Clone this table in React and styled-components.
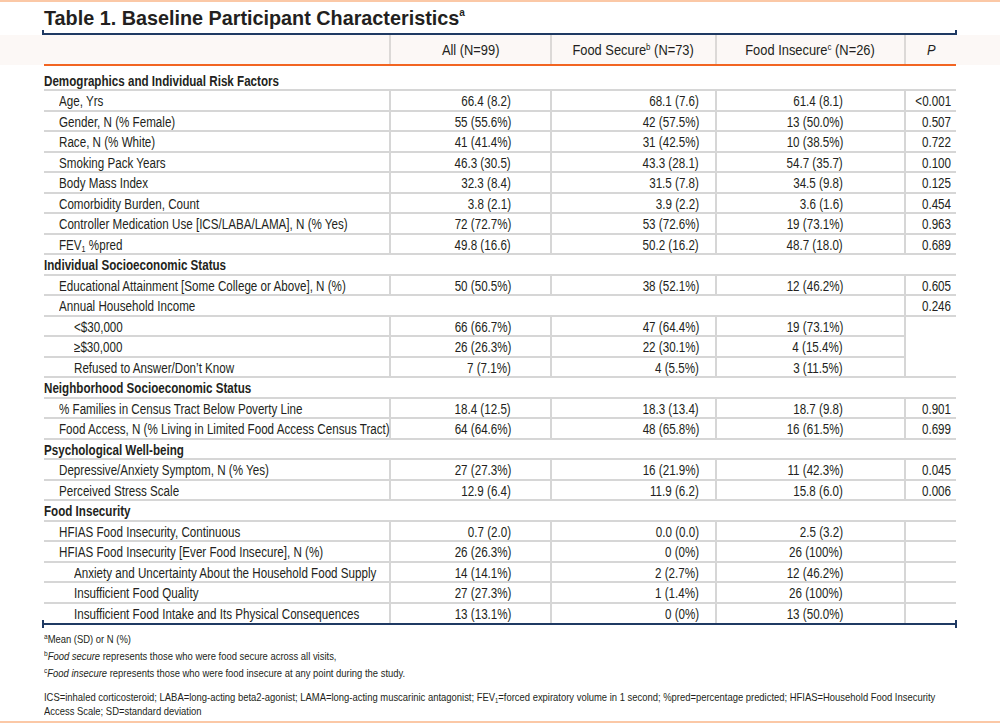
import React from "react"
import styled, { createGlobalStyle } from 'styled-components'

const rows = [
    { section: 'Demographics and Individual Risk Factors', first: true },
    { label: 'Age, Yrs', v: ['66.4 (8.2)', '68.1 (7.6)', '61.4 (8.1)', '<0.001'] },
    { label: 'Gender, N (% Female)', v: ['55 (55.6%)', '42 (57.5%)', '13 (50.0%)', '0.507'] },
    { label: 'Race, N (% White)', v: ['41 (41.4%)', '31 (42.5%)', '10 (38.5%)', '0.722'] },
    { label: 'Smoking Pack Years', v: ['46.3 (30.5)', '43.3 (28.1)', '54.7 (35.7)', '0.100'] },
    { label: 'Body Mass Index', v: ['32.3 (8.4)', '31.5 (7.8)', '34.5 (9.8)', '0.125'] },
    { label: 'Comorbidity Burden, Count', v: ['3.8 (2.1)', '3.9 (2.2)', '3.6 (1.6)', '0.454'] },
    { label: 'Controller Medication Use [ICS/LABA/LAMA], N (% Yes)', v: ['72 (72.7%)', '53 (72.6%)', '19 (73.1%)', '0.963'] },
    { label: <>FEV<sub>1</sub> %pred</>, v: ['49.8 (16.6)', '50.2 (16.2)', '48.7 (18.0)', '0.689'] },
    { section: 'Individual Socioeconomic Status' },
    { label: 'Educational Attainment [Some College or Above], N (%)', v: ['50 (50.5%)', '38 (52.1%)', '12 (46.2%)', '0.605'] },
    { label: 'Annual Household Income', onlyP: '0.246' },
    { label: '<$30,000', indent: 2, v: ['66 (66.7%)', '47 (64.4%)', '19 (73.1%)'], pSpan: 3 },
    { label: '≥$30,000', indent: 2, v: ['26 (26.3%)', '22 (30.1%)', '4 (15.4%)'] },
    { label: 'Refused to Answer/Don’t Know', indent: 2, v: ['7 (7.1%)', '4 (5.5%)', '3 (11.5%)'] },
    { section: 'Neighborhood Socioeconomic Status' },
    { label: '% Families in Census Tract Below Poverty Line', v: ['18.4 (12.5)', '18.3 (13.4)', '18.7 (9.8)', '0.901'] },
    { label: 'Food Access, N (% Living in Limited Food Access Census Tract)', v: ['64 (64.6%)', '48 (65.8%)', '16 (61.5%)', '0.699'] },
    { section: 'Psychological Well-being' },
    { label: 'Depressive/Anxiety Symptom, N (% Yes)', v: ['27 (27.3%)', '16 (21.9%)', '11 (42.3%)', '0.045'] },
    { label: 'Perceived Stress Scale', v: ['12.9 (6.4)', '11.9 (6.2)', '15.8 (6.0)', '0.006'] },
    { section: 'Food Insecurity' },
    { label: 'HFIAS Food Insecurity, Continuous', v: ['0.7 (2.0)', '0.0 (0.0)', '2.5 (3.2)', ''] },
    { label: 'HFIAS Food Insecurity [Ever Food Insecure], N (%)', v: ['26 (26.3%)', '0 (0%)', '26 (100%)', ''] },
    { label: 'Anxiety and Uncertainty About the Household Food Supply', indent: 2, v: ['14 (14.1%)', '2 (2.7%)', '12 (46.2%)', ''] },
    { label: 'Insufficient Food Quality', indent: 2, v: ['27 (27.3%)', '1 (1.4%)', '26 (100%)', ''] },
    { label: 'Insufficient Food Intake and Its Physical Consequences', indent: 2, v: ['13 (13.1%)', '0 (0%)', '13 (50.0%)', ''] },
]

// right padding of each value column, so numbers line up like the print table
const valuePad = [39, 16, 61, 5]

export default function App() {
    return <Page>
        <GlobalStyle />
        <Title>Table 1. Baseline Participant Characteristics<TitleSup>a</TitleSup></Title>
        <Rule><Tick /><Line /><Tick /></Rule>
        <Table>
            <colgroup>
                <col style={{ width: 346 }} />
                <col style={{ width: 161 }} />
                <col style={{ width: 165 }} />
                <col style={{ width: 189 }} />
                <col style={{ width: 51 }} />
            </colgroup>
            <thead>
                <tr>
                    <HeadCell $edge="left"></HeadCell>
                    <HeadCell><Narrow $origin="center">All (N=99)</Narrow></HeadCell>
                    <HeadCell><Narrow $origin="center">Food Secure<Sup>b</Sup> (N=73)</Narrow></HeadCell>
                    <HeadCell><Narrow $origin="center">Food Insecure<Sup>c</Sup> (N=26)</Narrow></HeadCell>
                    <HeadCell $edge="right"><Narrow $origin="center"><em>P</em></Narrow></HeadCell>
                </tr>
            </thead>
            <tbody>
                {rows.map((r, i) => {
                    const last = i === rows.length - 1
                    if (r.section) {
                        return <Row key={i} $h={r.first ? 25 : 20.5}>
                            <SectionCell colSpan={5} $first={r.first}><Narrow>{r.section}</Narrow></SectionCell>
                        </Row>
                    }
                    if (r.onlyP) {
                        return <Row key={i} $h={20.5}>
                            <LabelCell colSpan={4} $indent={1}><Narrow>{r.label}</Narrow></LabelCell>
                            <ValueCell $pad={valuePad[3]}><Narrow $origin="right">{r.onlyP}</Narrow></ValueCell>
                        </Row>
                    }
                    const hasP = r.v.length === 4
                    return <Row key={i} $h={20.5}>
                        <LabelCell $indent={r.indent || 1} $last={last}><Narrow>{r.label}</Narrow></LabelCell>
                        {r.v.slice(0, 3).map((val, j) =>
                            <ValueCell key={j} $pad={valuePad[j]} $last={last}><Narrow $origin="right">{val}</Narrow></ValueCell>
                        )}
                        {hasP && <ValueCell $pad={valuePad[3]} $last={last}><Narrow $origin="right">{r.v[3]}</Narrow></ValueCell>}
                        {r.pSpan && <ValueCell rowSpan={r.pSpan}></ValueCell>}
                    </Row>
                })}
            </tbody>
        </Table>
        <Rule><Tick /><Line /><Tick /></Rule>
        <Notes>
            <Note><NoteText><NoteMark>a</NoteMark>Mean (SD) or N (%)</NoteText></Note>
            <Note><NoteText><NoteMark>b</NoteMark><em>Food secure</em> represents those who were food secure across all visits,</NoteText></Note>
            <Note><NoteText><NoteMark>c</NoteMark><em>Food insecure</em> represents those who were food insecure at any point during the study.</NoteText></Note>
            <Abbrev>
                <NoteText>
                    ICS=inhaled corticosteroid; LABA=long-acting beta2-agonist; LAMA=long-acting muscarinic antagonist; FEV<sub>1</sub>=forced expiratory volume in 1 second; %pred=percentage predicted; HFIAS=Household Food Insecurity<br />
                    Access Scale; SD=standard deviation
                </NoteText>
            </Abbrev>
        </Notes>
        <BottomBar />
    </Page>
}

const GlobalStyle = createGlobalStyle`
    html, body {
        margin: 0;
        padding: 0;
        background: #ffffff;
    }
    sub {
        font-size: 0.62em;
        vertical-align: -0.25em;
        line-height: 0;
    }
`

const Page = styled.div`
    width: 1000px;
    height: 723px;
    overflow: hidden;
    display: flex;
    flex-direction: column;
    border-top: 2px solid #fbc8a6;
    box-sizing: border-box;
    color: #231f20;
    font-family: "Liberation Sans", Arial, sans-serif;
`

// no narrow face is installed, so condensed type is drawn by squeezing the run
const Narrow = styled.span`
    display: inline-block;
    vertical-align: middle;
    white-space: nowrap;
    transform: scaleX(0.83);
    transform-origin: ${p => p.$origin || 'left'} center;
`

const Title = styled.h1`
    margin: 0;
    padding: 5px 0 0 44px;
    height: 26px;
    font-weight: 700;
    font-size: 19.8px;
    line-height: 22px;
    color: #231f20;
`

const TitleSup = styled.sup`
    font-size: 10px;
    vertical-align: 9px;
    line-height: 0;
`

const Rule = styled.div`
    display: flex;
    align-items: center;
    width: 915px;
    margin-left: 42px;
    height: 2px;
    flex: none;
`

const Tick = styled.div`
    width: 2px;
    height: 8px;
    background: #1f3a63;
    flex: none;
`

const Line = styled.div`
    flex: 1;
    height: 2px;
    background: #1f3a63;
`

const Table = styled.table`
    width: 912px;
    margin-left: 44px;
    border-collapse: collapse;
    table-layout: fixed;
    font-size: 14px;
    line-height: 16px;
    flex: none;
`

const Row = styled.tr`
    height: ${p => p.$h}px;
`

const HeadCell = styled.th`
    height: 29px;
    padding: 0;
    font-size: 15.5px;
    font-weight: 400;
    text-align: center;
    background: #fcf8f6;
    border-bottom: 2px solid #f26522;
    border-left: ${p => p.$edge === 'left' ? 'none' : '2px solid #dcd9d7'};
    box-shadow: ${p => p.$edge === 'left' ? '-44px 0 0 #fcf8f6' : p.$edge === 'right' ? '44px 0 0 #fcf8f6' : 'none'};
`

const Sup = styled.sup`
    font-size: 0.62em;
    vertical-align: 0.55em;
    line-height: 0;
`

const SectionCell = styled.td`
    padding: ${p => p.$first ? '6px 0 0' : '0'};
    font-weight: 700;
    text-align: left;
    border-bottom: 2px solid #d6d6d6;
`

const LabelCell = styled.td`
    padding: 0 0 0 ${p => p.$indent === 2 ? 30 : 15}px;
    border-bottom: ${p => p.$last ? 'none' : '2px solid #d6d6d6'};
`

const ValueCell = styled.td`
    padding: 0 ${p => p.$pad || 0}px 0 0;
    text-align: right;
    border-left: 2px solid #d6d6d6;
    border-bottom: ${p => p.$last ? 'none' : '2px solid #d6d6d6'};
`

const Notes = styled.div`
    padding: 6px 0 0 44px;
    font-size: 11.5px;
`

const Note = styled.div`
    line-height: 17px;
`

const NoteText = styled.span`
    display: inline-block;
    white-space: nowrap;
    transform: scaleX(0.82);
    transform-origin: left center;
`

const NoteMark = styled.span`
    font-size: 8px;
    vertical-align: 4px;
    line-height: 0;
`

const Abbrev = styled.div`
    margin-top: 8px;
    line-height: 14px;
`

const BottomBar = styled.div`
    margin-top: auto;
    height: 2px;
    background: #fbc8a6;
    flex: none;
`
